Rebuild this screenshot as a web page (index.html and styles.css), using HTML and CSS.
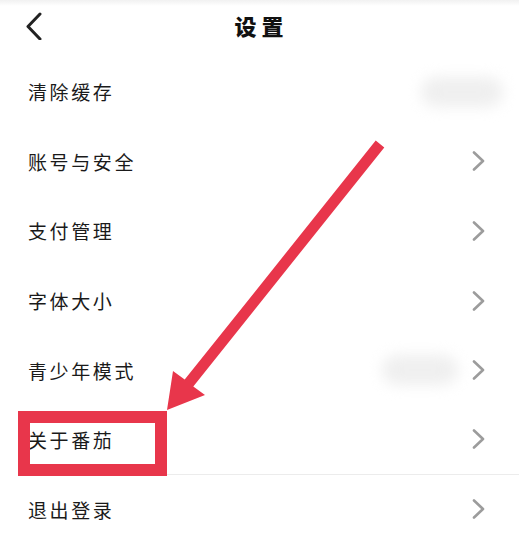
FILE: index.html
```html
<!DOCTYPE html>
<html lang="zh-CN">
<head>
<meta charset="utf-8">
<title>设置</title>
<link rel="stylesheet" href="styles.css">
</head>
<body>
<div class="page">
  <header class="header">
    <div class="back">
      <svg width="16" height="28" viewBox="0 0 16 28"><polyline points="14,2 2,14.5 14,27" fill="none" stroke="#222" stroke-width="3" stroke-linecap="round" stroke-linejoin="round"/></svg>
    </div>
    <h1 class="title">设置</h1>
    <div class="spacer"></div>
  </header>
  <ul class="list">
    <li class="row"><span class="label">清除缓存</span><span class="right"><span class="blob blob-cache"></span></span></li>
    <li class="row"><span class="label">账号与安全</span><span class="right"><svg class="chev" width="13" height="20" viewBox="0 0 13 20"><polyline points="2,1.5 11,10 2,18.5" fill="none" stroke="#9c9c9c" stroke-width="2.6" stroke-linecap="round" stroke-linejoin="round"/></svg></span></li>
    <li class="row"><span class="label">支付管理</span><span class="right"><svg class="chev" width="13" height="20" viewBox="0 0 13 20"><polyline points="2,1.5 11,10 2,18.5" fill="none" stroke="#9c9c9c" stroke-width="2.6" stroke-linecap="round" stroke-linejoin="round"/></svg></span></li>
    <li class="row"><span class="label">字体大小</span><span class="right"><svg class="chev" width="13" height="20" viewBox="0 0 13 20"><polyline points="2,1.5 11,10 2,18.5" fill="none" stroke="#9c9c9c" stroke-width="2.6" stroke-linecap="round" stroke-linejoin="round"/></svg></span></li>
    <li class="row"><span class="label">青少年模式</span><span class="right"><span class="blob blob-teen"></span><svg class="chev" width="13" height="20" viewBox="0 0 13 20"><polyline points="2,1.5 11,10 2,18.5" fill="none" stroke="#9c9c9c" stroke-width="2.6" stroke-linecap="round" stroke-linejoin="round"/></svg></span></li>
    <li class="row divided"><span class="label">关于番茄</span><span class="right"><svg class="chev" width="13" height="20" viewBox="0 0 13 20"><polyline points="2,1.5 11,10 2,18.5" fill="none" stroke="#9c9c9c" stroke-width="2.6" stroke-linecap="round" stroke-linejoin="round"/></svg></span></li>
    <li class="row"><span class="label">退出登录</span><span class="right"><svg class="chev" width="13" height="20" viewBox="0 0 13 20"><polyline points="2,1.5 11,10 2,18.5" fill="none" stroke="#9c9c9c" stroke-width="2.6" stroke-linecap="round" stroke-linejoin="round"/></svg></span></li>
  </ul>
  <svg class="annotation" width="519" height="555" viewBox="0 0 519 555">
    <rect x="24" y="417" width="137" height="53" fill="none" stroke="#e8364b" stroke-width="12"/>
    <polygon points="375.7,140.6 384.3,147.4 193.3,386.4 205,395 167,410 173,371 184.7,379.6" fill="#e8364b"/>
  </svg>
</div>
</body>
</html>
```

FILE: styles.css
```css
* { box-sizing: border-box; }
html, body { margin: 0; padding: 0; background: #fff; }
body {
  font-family: "Noto Sans CJK SC", "Noto Sans", sans-serif;
  color: #1a1a1a;
}
.page {
  position: relative;
  width: 519px;
  height: 555px;
  overflow: hidden;
  background: linear-gradient(#f1f1f1 0, #fff 6px);
}
.header {
  height: 50px;
  display: grid;
  grid-template-columns: 1fr auto 1fr;
  align-items: center;
}
.back {
  padding-left: 26px;
  display: flex;
  align-items: center;
  padding-top: 1px;
}
.title {
  margin: 0 -6px 0 0;
  font-size: 22px;
  font-weight: 900;
  letter-spacing: 5px;
  color: #111;
  line-height: 1;
  padding-right: 2px;
}
.list {
  list-style: none;
  margin: 7px 0 0 0;
  padding: 0;
}
.row {
  height: 69.6px;
  margin-left: 28px;
  padding-right: 34px;
  display: flex;
  align-items: center;
  justify-content: space-between;
}
.row.divided { border-bottom: 1px solid #ececec; }
.label {
  font-size: 19px;
  letter-spacing: 2.6px;
  line-height: 1;
  color: #1a1a1a;
}
.right {
  display: flex;
  align-items: center;
  gap: 12px;
}
.chev { display: block; }
.blob {
  display: block;
  height: 30px;
  border-radius: 15px;
  background: #efefef;
  filter: blur(7px);
}
.blob-cache { width: 82px; margin-right: -18px; }
.blob-teen { width: 76px; margin-right: 2px; }
.annotation {
  position: absolute;
  left: 0;
  top: 0;
  pointer-events: none;
}
```
